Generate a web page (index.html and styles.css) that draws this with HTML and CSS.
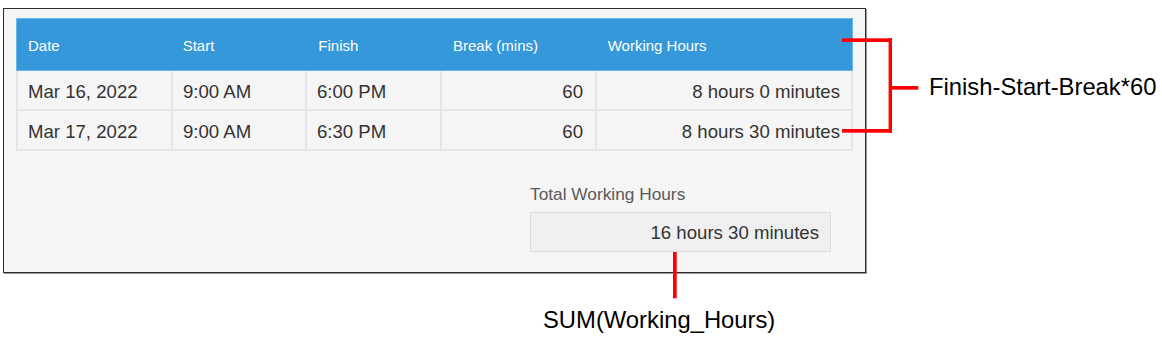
FILE: index.html
```html
<!DOCTYPE html>
<html>
<head>
<meta charset="utf-8">
<link rel="stylesheet" href="styles.css">
</head>
<body>
<div class="page">
  <div class="frame">
    <div class="table">
      <div class="row head">
        <div class="cell c1">Date</div>
        <div class="cell c2">Start</div>
        <div class="cell c3">Finish</div>
        <div class="cell c4">Break (mins)</div>
        <div class="cell c5">Working Hours</div>
      </div>
      <div class="row">
        <div class="cell c1">Mar 16, 2022</div>
        <div class="cell c2">9:00 AM</div>
        <div class="cell c3">6:00 PM</div>
        <div class="cell c4 num">60</div>
        <div class="cell c5 num">8 hours 0 minutes</div>
      </div>
      <div class="row">
        <div class="cell c1">Mar 17, 2022</div>
        <div class="cell c2">9:00 AM</div>
        <div class="cell c3">6:30 PM</div>
        <div class="cell c4 num">60</div>
        <div class="cell c5 num">8 hours 30 minutes</div>
      </div>
    </div>
    <div class="total">
      <div class="total-label">Total Working Hours</div>
      <div class="total-box">16 hours 30 minutes</div>
    </div>
  </div>
  <svg class="callouts" width="1162" height="340" viewBox="0 0 1162 340">
    <rect x="842" y="38.3" width="50" height="3.7" fill="#ff0000"/>
    <rect x="888.6" y="38.3" width="3.4" height="94.4" fill="#ff0000"/>
    <rect x="892" y="86" width="26.3" height="3.7" fill="#ff0000"/>
    <rect x="842" y="129" width="50" height="3.7" fill="#ff0000"/>
    <rect x="673" y="252" width="3.7" height="46.3" fill="#ff0000"/>
  </svg>
  <div class="note note-formula">Finish-Start-Break*60</div>
  <div class="note note-sum">SUM(Working_Hours)</div>
</div>
</body>
</html>
```

FILE: styles.css
```css
html, body {
  margin: 0;
  padding: 0;
  background: #ffffff;
}

body {
  font-family: "Liberation Sans", Arial, Helvetica, sans-serif;
  color: #333333;
}

.page {
  position: relative;
  width: 1162px;
  height: 340px;
  padding: 8px 0 0 3px;
  box-sizing: border-box;
}

.frame {
  width: 863px;
  height: 265px;
  box-sizing: border-box;
  border: 1px solid #2b2b2b;
  box-shadow: 1px 1px 0 #9a9a9a;
  background: #f5f5f5;
  padding: 9px 12px 0 12px;
}

.table {
  width: 837px;
  display: flex;
  flex-direction: column;
}

.row {
  display: flex;
  height: 40px;
}

.cell {
  box-sizing: border-box;
  display: flex;
  align-items: center;
  padding: 3px 12px 0 10px;
  font-size: 18.6px;
  color: #333333;
  border-right: 2px solid #e4e7e8;
  border-bottom: 2px solid #e4e7e8;
  white-space: nowrap;
}

.row .c1 {
  border-left: 2px solid #e4e7e8;
}

.c1 { width: 157px; }
.c2 { width: 134px; }
.c3 { width: 135px; }
.c4 { width: 155px; }
.c5 { width: 256px; }

.num {
  justify-content: flex-end;
  padding-right: 12px;
}

.row .c5.num {
  padding-right: 11px;
}

.row.head {
  height: 53px;
  background: #3498db;
  border: 1px solid #6ab6ea;
  box-sizing: border-box;
}

.row.head .cell {
  font-size: 15px;
  color: #ffffff;
  border: none;
  padding: 1px 10px 0 10px;
}

.row.head .c1 { width: 156px; padding-left: 11px; }
.row.head .c2 { width: 136px; }
.row.head .c5 { width: 255px; }

.total {
  margin: 33px 0 0 514px;
  width: 301px;
  display: flex;
  flex-direction: column;
  gap: 8px;
}

.total-label {
  font-size: 17.3px;
  line-height: 20px;
  color: #5a5a5a;
}

.total-box {
  height: 40px;
  box-sizing: border-box;
  background: #efefef;
  border: 1px solid #dcdcdc;
  display: flex;
  align-items: center;
  justify-content: flex-end;
  padding: 1px 11px 0 0;
  font-size: 18.6px;
  color: #333333;
}

.callouts {
  position: absolute;
  left: 0;
  top: 0;
  pointer-events: none;
}

.note {
  position: absolute;
  font-size: 23.8px;
  line-height: 1;
  color: #000000;
  white-space: nowrap;
}

.note-formula {
  left: 929px;
  top: 75px;
}

.note-sum {
  left: 543px;
  top: 308px;
}
```
